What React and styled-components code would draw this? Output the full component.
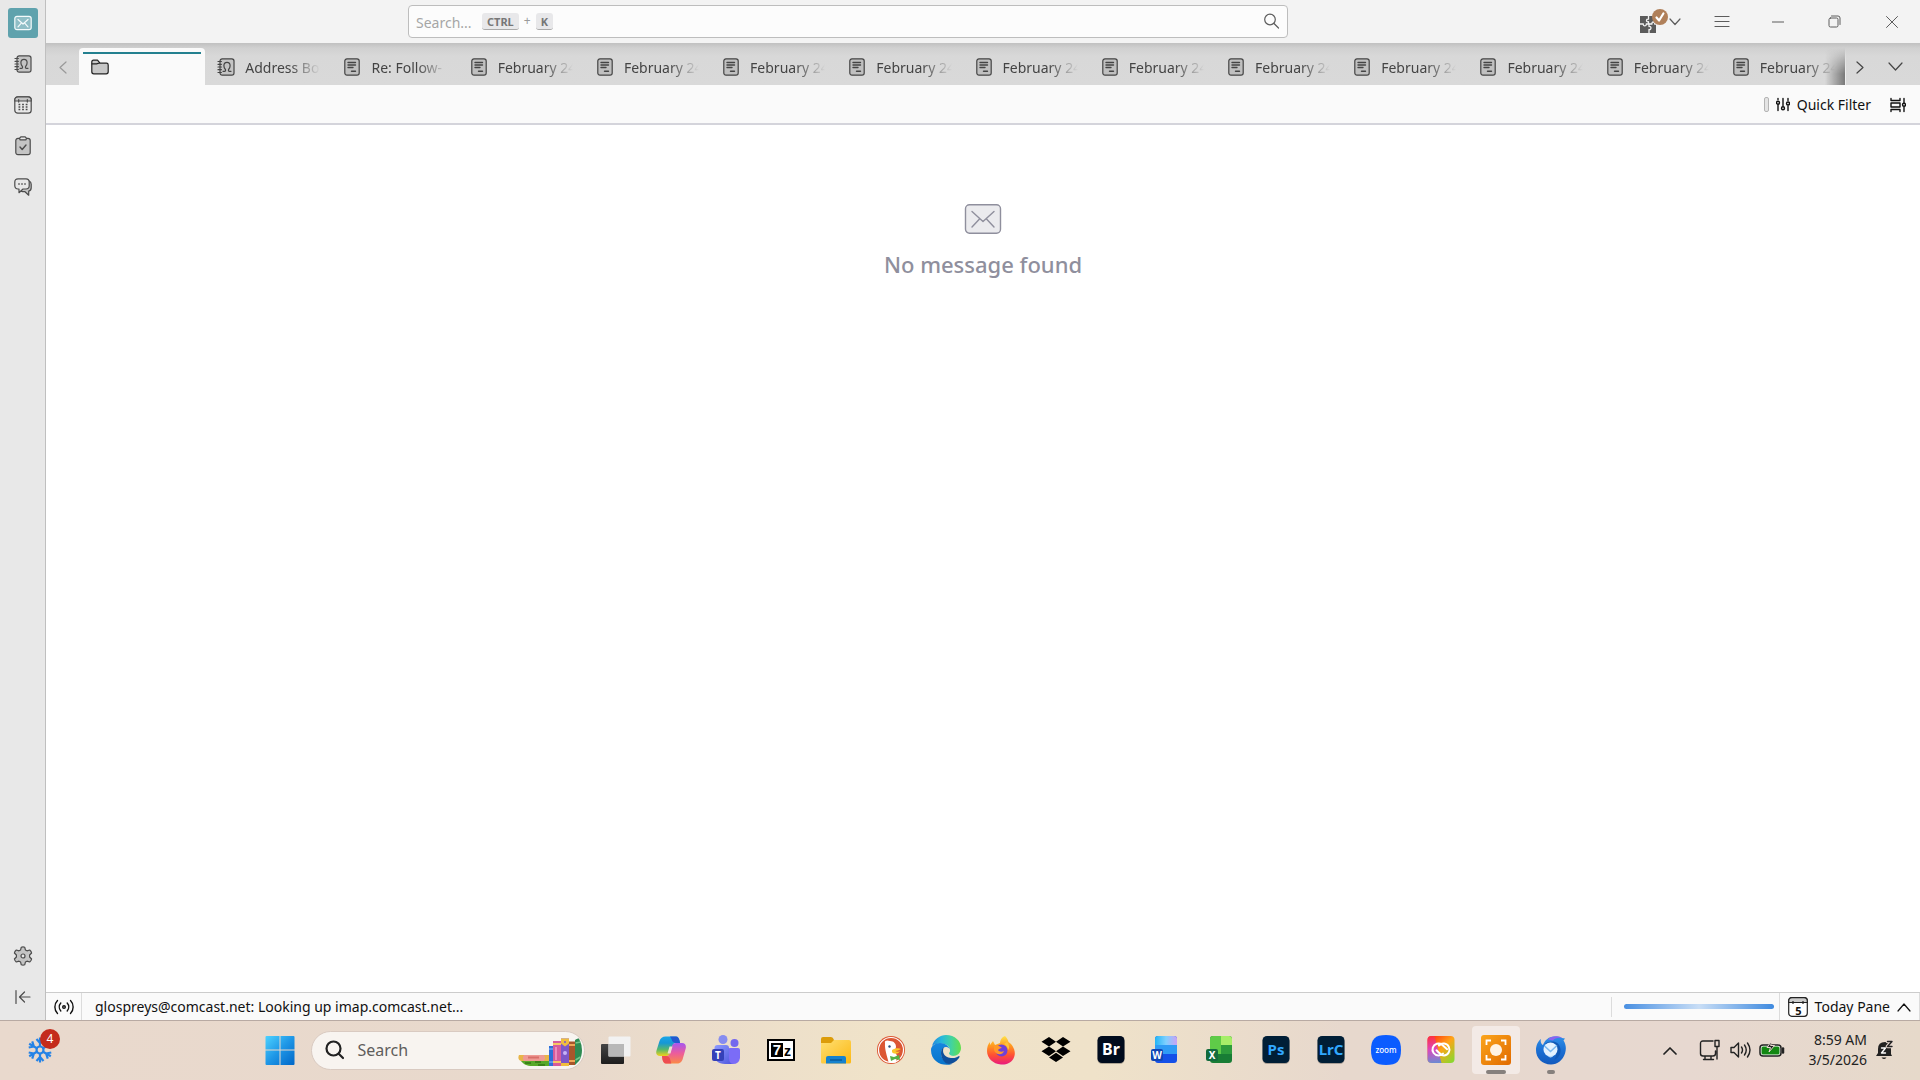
import React from "react";
import styled, { createGlobalStyle } from "styled-components";

const Global = createGlobalStyle`
  * { box-sizing: border-box; }
  body { margin: 0; background: #fff; }
  body, button, input { font-family: "Noto Sans", "Open Sans", sans-serif; }
  button { border: 0; background: none; padding: 0; margin: 0; color: inherit; }
  svg { display: block; flex: none; }
`;

const Screen = styled.div`
  height: 100vh;
  display: flex;
  flex-direction: column;
`;
const Mail = styled.div`
  flex: 1;
  min-height: 0;
  display: flex;
`;
const Spaces = styled.nav`
  flex: none;
  width: 46px;
  padding: 8px 0;
  display: flex;
  flex-direction: column;
  align-items: center;
  gap: 11px;
  background: #e8e8e8;
  border-right: 1px solid #bfbfbf;
  color: #4c4c4c;
`;
const SpaceButton = styled.button`
  width: 30px;
  height: 30px;
  display: grid;
  place-items: center;
  border-radius: 3px;
  background: ${(p) => (p.$active ? "#5fa2ad" : "transparent")};
  color: ${(p) => (p.$active ? "#f4fafb" : "inherit")};
`;
const Grow = styled.div`
  flex: ${(p) => p.$n || 1};
`;
const Main = styled.main`
  flex: 1;
  min-width: 0;
  display: flex;
  flex-direction: column;
`;
const TitleBar = styled.header`
  height: 44px;
  flex: none;
  display: flex;
  align-items: center;
  background: #f3f3f3;
  border-bottom: 1px solid #c2c2c2;
  color: #5c5c5c;
`;
const SearchBox = styled.form`
  position: relative;
  flex: 0 1 880px;
  height: 33px;
  margin-bottom: 1px;
  display: flex;
  align-items: center;
  padding-right: 7px;
  background: #fcfcfc;
  border: 1px solid #bdbdbd;
  border-radius: 4px;
`;
const SearchInput = styled.input`
  flex: 1;
  min-width: 0;
  height: 31px;
  padding: 2px 7px 0;
  border: 0;
  outline: 0;
  background: transparent;
  font-size: 14px;
  &::placeholder { color: #a6a6a6; opacity: 1; }
`;
const Shortcut = styled.span`
  position: absolute;
  left: 73px;
  top: 7px;
  display: flex;
  align-items: center;
  gap: 5px;
  font-size: 12px;
  line-height: 16px;
  color: #9a9a9a;
  pointer-events: none;
`;
const Kbd = styled.kbd`
  height: 17px;
  padding: 0 5px;
  border-radius: 3px;
  background: #e8e8ea;
  border-bottom: 1px solid #a9a9a9;
  color: #777;
  font: 700 11px/17px "Noto Sans", sans-serif;
`;
const Controls = styled.div`
  flex: 632;
  display: flex;
  justify-content: flex-end;
  align-items: center;
`;
const Control = styled.button`
  flex: none;
  width: ${(p) => p.$w || 57}px;
  height: 43px;
  display: flex;
  align-items: center;
  justify-content: center;
`;
const TabBar = styled.div`
  flex: none;
  height: 41px;
  padding-right: 4px;
  display: flex;
  align-items: stretch;
  background: linear-gradient(#c3c3c3, #d0d0d0 4px, #d8d8d8 12px, #d9d9d9);
  color: #444;
`;
const Scroll = styled.button`
  flex: none;
  width: ${(p) => p.$w}px;
  padding-top: 5px;
  display: grid;
  place-items: center;
  color: ${(p) => (p.$dim ? "#999" : "#444")};
`;
const Tabs = styled.div`
  position: relative;
  flex: 1;
  min-width: 0;
  display: flex;
  padding-top: 4px;
  &::after {
    content: "";
    position: absolute;
    right: 0;
    top: 4px;
    bottom: 0;
    width: 20px;
    background: linear-gradient(to right, transparent, #606060cc);
    mask: linear-gradient(transparent, #000 70%);
    border-right: 1px solid #eee;
  }
`;
const Tab = styled.button`
  flex: 1 1 0;
  min-width: 0;
  padding: 0 11px 0 12px;
  display: flex;
  align-items: center;
  gap: 10px;
  position: relative;
  border-radius: 4px 4px 0 0;
  background: ${(p) => (p.$active ? "#fafafa" : "transparent")};
  &::before {
    content: "";
    display: ${(p) => (p.$active ? "block" : "none")};
    position: absolute;
    left: 4px;
    right: 4px;
    top: 4px;
    height: 2px;
    background: #23808f;
  }
`;
const TabLabel = styled.span`
  flex: 1;
  min-width: 0;
  padding-top: 1px;
  overflow: hidden;
  white-space: nowrap;
  text-align: left;
  font-size: 14px;
  line-height: 21px;
  mask: linear-gradient(to right, #000 60%, transparent);
`;
const Toolbar = styled.div`
  flex: none;
  height: 40px;
  padding: 1px 14px 0 0;
  display: flex;
  align-items: center;
  justify-content: flex-end;
  gap: 19px;
  background: #fafafa;
  border-bottom: 2px solid #d4d4db;
`;
const ToolButton = styled.button`
  display: flex;
  align-items: center;
  gap: 7px;
  font-size: 14px;
  line-height: 20px;
  color: #111;
`;
const Handle = styled.span`
  width: 5px;
  height: 15px;
  border: 1px solid #b4b4b4;
  border-radius: 2px;
  background: #e4e4e4;
`;
const Empty = styled.section`
  flex: 1;
  min-height: 0;
  padding-top: 79px;
  display: flex;
  flex-direction: column;
  align-items: center;
  gap: 13px;
  background: #fff;
  color: #8f8f9d;
`;
const EmptyTitle = styled.h1`
  margin: 0;
  font-size: 22px;
  font-weight: 500;
  line-height: 34px;
`;
const StatusBar = styled.footer`
  flex: none;
  height: 28px;
  display: flex;
  align-items: center;
  background: #fafafa;
  border-top: 1px solid #ccc;
  font-size: 14px;
  line-height: 20px;
  color: #111;
`;
const StatusCell = styled.div`
  height: ${(p) => (p.$short ? "20px" : "100%")};
  display: flex;
  align-items: center;
  padding: ${(p) => p.$pad || "0"};
  border: 0 solid #dcdcdc;
  border-width: ${(p) => p.$edges};
`;
const Progress = styled.div`
  width: 150px;
  height: 5px;
  border-radius: 3px;
  background: linear-gradient(to right, #4a90e2, #c9def6 50%, #3f8adf);
`;
const Pane = styled.button`
  display: flex;
  align-items: center;
  gap: 7px;
  font-size: 14px;
  line-height: 20px;
  color: #111;
`;

const Taskbar = styled.div`
  flex: none;
  height: 60px;
  padding: 0 27px 1px 22px;
  display: flex;
  align-items: center;
  border-top: 1px solid #b8aaa3;
  background: linear-gradient(to right, #e9d9cd 0, #e8d9cc 30%, #f0e3c9 46%, #efe2c9 57%, #e7d8cd 70%, #e7d8d0 88%, #e6d9ca);
  color: #222;
`;
const Weather = styled.button`
  position: relative;
  width: 36px;
  height: 48px;
  display: grid;
  place-items: center;
`;
const Badge = styled.span`
  position: absolute;
  left: 18px;
  top: 3px;
  width: 20px;
  height: 20px;
  border-radius: 50%;
  background: #c42b1c;
  color: #fff;
  font-size: 12px;
  line-height: 20px;
  text-align: center;
`;
const Apps = styled.div`
  display: flex;
  align-items: center;
  gap: 7px;
`;
const AppButton = styled.button`
  position: relative;
  width: 48px;
  height: 48px;
  display: grid;
  place-items: center;
  border-radius: 4px;
  background: ${(p) => (p.$active ? "#f3eae6" : "transparent")};
  &::after {
    content: "";
    display: ${(p) => (p.$run ? "block" : "none")};
    position: absolute;
    bottom: 0;
    left: calc(50% - ${(p) => p.$run / 2 || 0}px);
    width: ${(p) => p.$run || 0}px;
    height: 4px;
    border-radius: 2px;
    background: #86807d;
  }
`;
const Pill = styled.label`
  width: 274px;
  height: 39px;
  padding: 0 2px 0 13px;
  display: flex;
  align-items: center;
  gap: 12px;
  overflow: hidden;
  border-radius: 20px;
  border: 1px solid #d9cac1;
  background: #f8f4f0;
`;
const PillInput = styled.input`
  flex: 1;
  min-width: 0;
  padding: 0;
  border: 0;
  outline: 0;
  background: transparent;
  font-size: 16px;
  &::placeholder { color: #605d5b; opacity: 1; }
`;
const Tray = styled.div`
  display: flex;
  align-items: center;
  gap: 8px;
`;
const Clock = styled.time`
  width: 74px;
  text-align: right;
  font-size: 14px;
  line-height: 20px;
`;

const Svg = ({ w = 18, h, vb, sw = 1.2, children }) => (
  <svg width={w} height={h || w} viewBox={vb || `0 0 ${w} ${h || w}`} fill="none" stroke="currentColor" strokeWidth={sw} strokeLinecap="round" strokeLinejoin="round" aria-hidden="true">
    {children}
  </svg>
);

const Envelope = () => (
  <Svg>
    <rect x=".8" y="2.3" width="16.4" height="13.4" rx="2.2" fill="#8fbec6" />
    <path d="M4 5.5 9 10l5-4.5M4 12.8l3.3-3.6M14 12.8l-3.3-3.6" />
  </Svg>
);
const BookIcon = () => (
  <Svg>
    <rect x="3" y=".8" width="14" height="16.4" rx="2.2" fill="#c4c4c4" />
    <path d="M1 3.5h3.4M1 6.3h3.4M1 9h3.4M1 11.700h3.4M1 14.5h3.4" />
    <path d="M6 13.300h1.500c1 0 1.300-1 .9-1.800C7.300 10.300 6.900 9 6.900 7.700c0-2 1.200-3.300 3.100-3.300s3.100 1.300 3.100 3.300c0 1.300-.4 2.600-1.500 3.800-.4.800-.1 1.800.9 1.800H14" />
  </Svg>
);
const CalendarIcon = () => (
  <Svg>
    <rect x=".8" y=".8" width="16.4" height="16.4" rx="3" fill="#e8e8e8" />
    <path d="M.8 5V4c0-1.900 1.300-3.200 3.200-3.200h10c1.900 0 3.200 1.300 3.200 3.200v1z" fill="#c4c4c4" />
    <path d="M4.700 3.500v2.600M13.300 3.500v2.600" />
    <path d="M4.500 8.500h1.800M8.100 8.500h1.800M11.700 8.500h1.800M4.500 11h1.800M8.100 11h1.800M11.700 11h1.800M4.500 13.600h1.800M8.100 13.600h1.800M11.700 13.600h1.800" strokeWidth="1.500" strokeLinecap="butt" />
  </Svg>
);
const TasksIcon = () => (
  <Svg w={18} h={20}>
    <rect x="1.800" y="2.300" width="14.400" height="16.400" rx="2.200" fill="#c4c4c4" />
    <path d="M5.500 2.300 6.800.8h4.400l1.300 1.500-.5 1.500H6z" fill="#e8e8e8" />
    <path d="m6 11 2.200 2.500L12 9" strokeWidth="1.400" />
  </Svg>
);
const ChatIcon = () => (
  <Svg w={18} h={18}>
    <path d="M15.200 3c1.300.6 2 1.700 2 3.300v3.400c0 2-.8 3-2.500 3.400v4.100l-3.700-3.500H8.500C7.400 13.700 7 12.800 7 12" fill="#c4c4c4" />
    <path d="M4 .8h8c2 0 3.200 1.200 3.200 3.200v3.800c0 2-1.200 3.200-3.200 3.200H9l-4 3.700V11H4C2 11 .8 9.800.8 7.800V4C.8 2 2 .8 4 .8z" fill="#e8e8e8" />
    <path d="M4.800 6h.4M7.800 6h.4M10.800 6h.4" strokeWidth="1.500" />
  </Svg>
);
const GearIcon = () => (
  <Svg w={20}>
    <path d="M8.300 1.200q1.700-.8 3.400 0l.7 2.700 1.600.9 2.700-.8q1.600 1.200 1.900 3l-2 2v2l2 2q-.3 1.800-1.900 3l-2.700-.8-1.600.9-.7 2.700q-1.700.8-3.400 0l-.7-2.700-1.600-.9-2.700.8q-1.600-1.200-1.900-3l2-2V9l-2-2q.3-1.800 1.900-3l2.700.8 1.600-.9z" fill="#c4c4c4" />
    <circle cx="10" cy="10" r="2" fill="#e8e8e8" />
  </Svg>
);
const CollapseIcon = () => (
  <Svg w={16}>
    <path d="M1 1.500v13M4.500 8H15M9.500 3l-5 5 5 5" />
  </Svg>
);
const FolderIcon = () => (
  <Svg w={18}>
    <path d="M.8 13.800V4.200c0-1.400.5-2 1.700-2h4l2.500 3h6.500c1.200 0 1.700.7 1.700 1.800v6.800c0 1.300-.6 2-2 2H2.800c-1.400 0-2-.7-2-2z" fill="#c8c8c8" stroke="#222" />
    <path d="M1 5.800h4.500L8.500 5" stroke="#222" />
  </Svg>
);
const MessageIcon = () => (
  <Svg w={18}>
    <rect x="1.800" y=".8" width="14.400" height="16.400" rx="2.200" fill="#c0c0c0" />
    <path d="M5 4.500h7.500M5 7h7.500M5 9.500h5M8.500 13.300h4" strokeWidth="1.400" />
  </Svg>
);
const Chevron = ({ d, w = 12, h = 12 }) => (
  <Svg w={w} h={h}><path d={d} /></Svg>
);
const AddonIcon = () => (
  <Svg w={30} h={26} sw={0}>
    <path d="M1 7h16v17H1z" fill="#5b5b5b" />
    <path d="M9.500 7v3.200c-2.500-.8-2.800 3.300 0 2.500V15M1 15h3.300c-.6 2.500 3.400 2.500 3 0h3.500M10 15v2.500c2.600-.5 2.600 3.600 0 3V24M11 15h2c-.5-2.800 3-2.500 2.700 0H18" stroke="#f3f3f3" strokeWidth="1.300" />
    <circle cx="21" cy="8" r="8" fill="#b0805a" />
    <path d="m17.500 8.500 2.600 3 4.300-7" stroke="#fff" strokeWidth="2.200" />
  </Svg>
);
const FilterIcon = () => (
  <Svg w={14} h={15} sw={1.4}>
    <path d="M2 1.500v1M2 8v5.500M7 1.500V9M12 1.500v2M12 9v4.500" />
    <circle cx="2" cy="5.800" r="1.500" /><circle cx="7" cy="11.300" r="1.500" /><circle cx="12" cy="6.500" r="1.500" />
  </Svg>
);
const DisplayIcon = () => (
  <Svg w={16} sw={1.4}>
    <path d="M1 1.500v2h9v-2M1 6h9v4H1zM1 14.500v-2h9v2M14 1.500V6M14 10v4.500" />
    <circle cx="14" cy="7.800" r="1.500" />
  </Svg>
);
const NetIcon = () => (
  <Svg w={20} h={16} sw={1.4}>
    <circle cx="10" cy="8" r="1.300" />
    <path d="M6.800 4c-2 2.300-2 5.700 0 8M13.200 4c2 2.300 2 5.700 0 8M3.500 1.500C0 5 0 11 3.500 14.500M16.500 1.500C20 5 20 11 16.500 14.500" />
  </Svg>
);

const Box = ({ bg, fg, t, size }) => (
  <svg width="30" height="30" viewBox="0 0 30 30" aria-hidden="true">
    <rect x="1.500" y="2" width="27" height="27" rx="4.500" fill="#0004" />
    <rect x="1.500" y="1" width="27" height="27" rx="4.500" fill={bg} />
    <text x="15" y="20" fill={fg} fontFamily="Noto Sans" fontWeight="700" fontSize={size} textAnchor="middle">{t}</text>
  </svg>
);
const Art = ({ children, w = 30 }) => (
  <svg width={w} height="30" viewBox={`0 0 ${w} 30`} aria-hidden="true">{children}</svg>
);
const Grad = ({ id, stops, v, h }) => (
  <linearGradient id={id} x1="0" y1="0" x2={v ? 0 : 1} y2={h ? 0 : 1}>
    {stops.map((c, i) => <stop key={i} offset={i / (stops.length - 1)} stopColor={c} />)}
  </linearGradient>
);

const WindowsLogo = () => (
  <Art>
    <Grad id="win" stops={["#4dd2ff", "#1e96e6", "#0067c8"]} />
    <path d="M1.500 1H14.500V14.500H.500V2a1 1 0 0 1 1-1zM15.500 1H28.500a1 1 0 0 1 1 1V14.500H15.500zM.500 15.500H14.500V30H1.500a1 1 0 0 1-1-1zM15.500 15.500H29.500V29a1 1 0 0 1-1 1H15.500z" fill="url(#win)" />
  </Art>
);
const Books = () => (
  <svg width="64" height="34" viewBox="0 -4 64 34" aria-hidden="true">
    <path d="M1 18h30v6H3c-3-1-3-4-2-6z" fill="#e8b548" />
    <path d="M6 18h20c1.500 2 1 4 0 6H6c-1.500-2-1.500-4 0-6z" fill="#ef9a94" /><path d="M10 19.500h11v2H10z" fill="#d96f6a" />
    <path d="M3 24h28v5H14c-5 0-9-2-11-5z" fill="#58a829" /><path d="M7 26h6M17 25h6M20 28h7" stroke="#337615" strokeWidth="1.500" />
    <path d="M31 9h4v20h-4z" fill="#2f6fd8" /><path d="M31 12h4M31 25h4" stroke="#8fc1ff" />
    <path d="M35 4h8v25h-8z" fill="#d65c9c" /><path d="M35 7h8M35 25h8" stroke="#f6c861" strokeWidth="2" /><path d="M38 10v13" stroke="#f39bc7" strokeWidth="1.500" />
    <path d="M43 1.500h8V29h-8z" fill="#7d57c7" /><path d="M43 1.500h8v5l-4 3-4-3zM43 26h8v3h-8z" fill="#f0bd3e" /><circle cx="47" cy="5" r="1" fill="#7d57c7" /><circle cx="47" cy="16" r="2" fill="#c7b2f5" />
    <path d="M51 4.500h6V28h-6z" fill="#a8562b" /><path d="M51 8h6M51 24h6" stroke="#f0a657" strokeWidth="2" />
    <path d="M57 3q2-2 4-1.500 3 6 3 12T61 24l-4 4z" fill="#2e8b52" /><path d="M57.500 6l5-1M57.500 23l5-3" stroke="#74c68b" strokeWidth="1.500" />
  </svg>
);
const Snowflake = () => (
  <Svg w={26} sw={2.2}>
    <g stroke="#2583e6" strokeLinecap="butt">
      <circle cx="13" cy="13" r="3.500" />
      {[0, 60, 120, 180, 240, 300].map((a) => (
        <path key={a} transform={`rotate(${a} 13 13)`} d="M13 9.500V.5M9.500 2l3.500 4 3.500-4" />
      ))}
    </g>
  </Svg>
);

const apps = [
  ["Task view", <Art>
    <Grad id="tv" stops={["#444", "#1d1d1d"]} v />
    <rect y="9" width="23" height="20" rx="1" fill="url(#tv)" /><rect x="7.500" y="1.500" width="22" height="20" rx="1" fill="#f2f2f2" /><path d="M7.500 9H23v12.500H7.500z" fill="#b8b8b8" />
  </Art>],
  ["Copilot", <Art>
    <Grad id="c1" stops={["#1aa6e8", "#1597d6", "#58b86a", "#f2d21a"]} v />
    <Grad id="c2" stops={["#a557f0", "#ec5c9c", "#fb8a45"]} v />
    <path d="M20 1.500c2 0 3 2 3.500 4L24 8h-4c-2 0-3 1-3.500 3l-1.500 6c-.8 3-2 4-5 4H4c-3 0-4.500-2-3.500-5.500L3.500 6c1-3 3-4.500 6-4.500z" fill="url(#c1)" />
    <path d="M14 1.500h6c2 0 3 2 3.500 4L24 8h-4c-2.500 0-4-1.500-4.500-4z" fill="#2358cf" />
    <path d="M10 28.500c-2 0-3-2-3.500-4L6 21h4c2.500 0 3.500-1 4.200-3.500L16 11c.8-2.300 2-3 4-3h6c3 0 4.500 2.500 3.700 5.500L27 23c-1 4-3 5.500-6 5.500z" fill="url(#c2)" />
    <path d="M6 21h4c2 0 4 1.500 4.300 4l1 3.500H10c-2 0-3-2-3.500-4z" fill="#ee4d52" />
    <path d="M13.500 11.500h3l-2 7h-3z" fill="#eee0d2" />
  </Art>],
  ["Teams", <Art>
    <Grad id="tm" stops={["#8e9bff", "#4c54dc"]} />
    <circle cx="12" cy="4.500" r="4.500" fill="#868cf0" /><circle cx="23.500" cy="8" r="4" fill="#7468ee" />
    <path d="M17 15q0-2 2-2h8q2 0 2 2v8q-1 6-7 6h-5z" fill="#7b6cf7" />
    <path d="M3.500 13q0-3 3-3H15q3 0 3 3v10q0 6 5 6H14C7 29 3.500 25 3.500 20z" fill="url(#tm)" />
    <rect x="1" y="14" width="12" height="12" rx="2" fill="#3440b8" /><text x="7" y="23.500" textAnchor="middle" fill="#fff" fontFamily="Noto Sans" fontWeight="700" fontSize="10">T</text>
  </Art>],
  ["7-Zip", <Art>
    <path d="M1 4h28v22H1z" fill="#000" /><path d="M3 6h24v18H3z" fill="#fff" /><path d="M5 8h12v14H5z" fill="#000" />
    <text x="11" y="20" textAnchor="middle" fill="#fff" fontFamily="Liberation Sans" fontWeight="700" fontSize="15">7</text><text x="21.500" y="21" textAnchor="middle" fill="#000" fontFamily="Liberation Sans" fontWeight="700" fontSize="14">z</text>
  </Art>],
  ["File Explorer", <Art>
    <Grad id="fe" stops={["#ffdf72", "#fcb813"]} />
    <path d="M0 4q0-2 2-2h8q2 0 3 3l6 2v6H0z" fill="#dc9c0a" /><path d="M0 8h10l3-3h15q2 0 2 2v20q0 1.500-1.500 1.500h-27Q0 28.500 0 27z" fill="url(#fe)" />
    <path d="M5 28.500V23q0-2 2-2h16q2 0 2 2v5.500z" fill="#1682ce" /><path d="M9 25h12" stroke="#095a9d" strokeWidth="1.500" />
  </Art>],
  ["DuckDuckGo", <Art>
    <circle cx="15" cy="15" r="14" fill="#dc5734" /><circle cx="15" cy="15" r="12.500" fill="none" stroke="#fff" strokeWidth="1.200" />
    <path d="M9 8C8 5 12 5 14 6c4 0 6 3 6 6l-1 4 2 5-1 6.500c-3 .8-6 .3-7.500-.5C11.500 22 8.500 15 9 8z" fill="#fff" /><circle cx="13.500" cy="11.500" r="1.200" fill="#284c79" />
    <path d="M16 15c3-2 7-2 9-1-2 1-4 2-6 2 2 1 4 1 5 0-2 4-7 3-8 1z" fill="#fcc72a" /><path d="m14 21 4 1 5-2 1 5-5-1-4 2z" fill="#56b146" />
  </Art>],
  ["Edge", <Art>
    <Grad id="e1" stops={["#2588dc", "#27b8dc", "#42d3a0", "#63df4a"]} h />
    <Grad id="e2" stops={["#1686df", "#0874cb"]} v />
    <path d="M1 11C3 4 9 0 15 0c9 0 15 6 15 13 0 5-4 8-8 8-4 0-5-2-3.500-4C20 14 18 10 13 9 8 8 3 9 1 11z" fill="url(#e1)" />
    <path d="M0 15c0-4 4-7 9-7 6 0 10 4 10 8 0-1-1-4-4-4-3 0-5 3-5 6 0 6 5 11 11 11-9 3-21-2-21-14z" fill="url(#e2)" />
    <path d="M10 18c0-3 1-5 3-6-2 4-1 10 7 11 3 .4 6-.5 8-2 1 0 .6 1 0 2-3 4-7 6-10 6-4 0-8-5-8-11z" fill="#104f9b" />
    <path d="M13 14c1-2 5-2 6 1 .3 1-.5 2-1 3 0 2 2 3 5 3-7 2-12-2-10-7z" fill="#f0e3c9" />
  </Art>],
  ["Firefox", <Art>
    <Grad id="ff" stops={["#ffe34a", "#ff9b20", "#ff5132", "#e91a80"]} v />
    <path d="M19 1c2 2 3 4 3.500 6L25 9c4 5 5 10 2.500 14.500C25 28 20 30 15 29.500 7 29 1 23 1 16c0-4 1-7 3-9v3l3-4 2 4 5-2c0-3 2-6 5-7z" fill="url(#ff)" />
    <circle cx="15.500" cy="15.500" r="6" fill="#7040d8" /><path d="M8 11c3-1 6 0 8 2-2 0-3 1-4 2 1 2 4 2 6 1-1 4-8 5-10-1z" fill="#ff9828" /><path d="M18 9c2 1 4 4 4 6 2-2 1-6-1-8z" fill="#ffc43c" />
  </Art>],
  ["Dropbox", <Art>
    <path d="m8 2 7 4.700-7 4.700L.5 6.700zM22 2l7.500 4.700-7.500 4.700-7-4.700zM8 11.500l7 4.700-7 4.700-7.500-4.700zM22 11.500l7.500 4.700-7.500 4.700-7-4.700zM8 22.500l7-4.700 7 4.700-7 4.600z" fill="#000" />
  </Art>],
  ["Bridge", <Box bg="#000b1d" fg="#fff" t="Br" size="16" />],
  ["Word", <Art>
    <Grad id="wd" stops={["#22b5f5", "#7fd0ff", "#c9a2f5"]} h />
    <rect x="4" y="1" width="22" height="27" rx="3" fill="#1450e8" /><path d="M4 10h22v9H4z" fill="#2f9bf5" /><path d="M4 10V4q0-3 3-3h16q3 0 3 3v6z" fill="url(#wd)" />
    <rect y="14" width="12" height="12" rx="2" fill="#1146b4" /><text x="6" y="23.500" textAnchor="middle" fill="#fff" fontFamily="Noto Sans" fontWeight="700" fontSize="10">W</text>
  </Art>],
  ["Excel", <Art>
    <rect x="4" y="1" width="22" height="27" rx="3" fill="#187d35" /><path d="M4 4q0-3 3-3h8v18H4z" fill="#5fcb48" /><path d="M15 1h8q3 0 3 3v6H15z" fill="#a6ee68" /><path d="M15 10h11v9H15z" fill="#2d9c3c" />
    <rect y="14" width="12" height="12" rx="2" fill="#126b3d" /><text x="6" y="23.500" textAnchor="middle" fill="#fff" fontFamily="Noto Sans" fontWeight="700" fontSize="10">X</text>
  </Art>],
  ["Photoshop", <Box bg="#001e36" fg="#31a8ff" t="Ps" size="15" />],
  ["Lightroom Classic", <Box bg="#001e36" fg="#31a8ff" t="LrC" size="15" />],
  ["Zoom", <Art>
    <path d="M15 0C26 0 30 4 30 15S26 30 15 30 0 26 0 15 4 0 15 0z" fill="#0b5cff" /><text x="15" y="17.500" textAnchor="middle" fill="#fff" fontFamily="Noto Sans" fontWeight="500" fontSize="8">zoom</text>
  </Art>],
  ["Creative Cloud", <Art>
    <Grad id="cc1" stops={["#ff1d12", "#ffa416", "#7bde33"]} />
    <Grad id="cc2" stops={["#ff3048", "#d43be8", "#4e7fff"]} v />
    <rect x="1.500" y="1" width="27" height="27" rx="4" fill="url(#cc1)" /><path d="M1.500 5q0-4 4-4h3l7 27h-10q-4 0-4-4z" fill="url(#cc2)" opacity=".8" />
    <path d="M17 18.500c-1 1.300-2.600 2-4.500 2a6 6 0 1 1 3.600-10.800l5 4.500M13 10.500a6 6 0 1 1 5 10c-3 0-4-2-7.500-5.200" fill="none" stroke="#fff" strokeWidth="2" strokeLinecap="round" />
  </Art>],
  ["Screen capture", <Art>
    <Grad id="sc" stops={["#fba51b", "#e16a00"]} />
    <rect width="30" height="30" rx="3" fill="url(#sc)" /><circle cx="15" cy="15" r="6" fill="#fff3e4" /><path d="M5.500 10V5.500H10M20 5.500h4.500V10M24.500 20v4.500H20M10 24.500H5.500V20" fill="none" stroke="#fff" strokeWidth="1.800" />
  </Art>, 20],
  ["Thunderbird", <Art>
    <Grad id="tb" stops={["#2f8fe8", "#1b6fd3", "#1259bd"]} v />
    <path d="M5 4c-1 3 .5 5 2 6 2-5 6-8.500 11-8.500 4 0 6 .3 8 1.500l3 .5-1.500 2C30 9 30.500 14 29 18.500 27 25 21.500 29.500 15 29.500 6 29.500 0 23 0 15 0 10.500 2 6 5 4z" fill="url(#tb)" />
    <path d="M12 4.500c2-2.500 6-3.500 9-3.200 2 .2 4 .7 5 1.700-4-.8-7 0-9 2.500z" fill="#8b63ef" />
    <path d="M9 9c5-4 13-3 15 3s-1 11-6 13c3-4 3-9 0-12S12 9 9 9z" fill="#1259b5" />
    <circle cx="14.500" cy="14.500" r="7" fill="#e4f2ff" /><path d="m8.500 11 6 5.500 6.500-6" fill="none" stroke="#7db8ee" strokeWidth="1.600" />
    <path d="M10 20q4 2 8 0-2 3-4 2.500z" fill="#b9dcfa" />
  </Art>, 8],
];

const months = Array.from({ length: 11 }, () => "February 24");

export default function App() {
  return (
    <Screen>
      <Global />
      <Mail>
        <Spaces aria-label="Spaces">
          <SpaceButton $active aria-label="Mail"><Envelope /></SpaceButton>
          <SpaceButton aria-label="Address Book"><BookIcon /></SpaceButton>
          <SpaceButton aria-label="Calendar"><CalendarIcon /></SpaceButton>
          <SpaceButton aria-label="Tasks"><TasksIcon /></SpaceButton>
          <SpaceButton aria-label="Chat"><ChatIcon /></SpaceButton>
          <Grow />
          <SpaceButton aria-label="Settings"><GearIcon /></SpaceButton>
          <SpaceButton aria-label="Collapse"><CollapseIcon /></SpaceButton>
        </Spaces>
        <Main>
          <TitleBar>
            <Grow $n={362} />
            <SearchBox role="search">
              <SearchInput placeholder="Search..." aria-label="Search" />
              <Shortcut><Kbd>CTRL</Kbd>+<Kbd>K</Kbd></Shortcut>
              <Svg w={17}><circle cx="7" cy="6.500" r="5.300" /><path d="m11 10.500 4.500 4.500" /></Svg>
            </SearchBox>
            <Controls>
              <Control $w={70} aria-label="Extensions"><AddonIcon /><Chevron d="m1 3 5 5.500L11 3" /></Control>
              <Control $w={54} aria-label="Menu"><Svg w={16}><path d="M1 2.500h14M1 7.500h14M1 12.500h14" /></Svg></Control>
              <Control aria-label="Minimize"><Svg w={12}><path d="M0 6h12" /></Svg></Control>
              <Control aria-label="Restore"><Svg w={13} sw={1}><rect x="1" y="3" width="9" height="9" rx="1.500" /><path d="M3.500 1h6.500q2 0 2 2v6.500" /></Svg></Control>
              <Control aria-label="Close"><Svg w={12} sw={1}><path d="m.5.5 11 11M11.500.5l-11 11" /></Svg></Control>
            </Controls>
          </TitleBar>
          <TabBar>
            <Scroll $w={33} $dim aria-label="Scroll tabs back"><Chevron w={9} h={13} d="M8 1 2 6.500 8 12" /></Scroll>
            <Tabs role="tablist">
              <Tab $active role="tab" aria-label="Folder"><FolderIcon /></Tab>
              <Tab role="tab"><BookIcon /><TabLabel>Address Book</TabLabel></Tab>
              <Tab role="tab"><MessageIcon /><TabLabel>Re: Follow-</TabLabel></Tab>
              {months.map((m, i) => (
                <Tab key={i} role="tab"><MessageIcon /><TabLabel>{m}</TabLabel></Tab>
              ))}
            </Tabs>
            <Scroll $w={28} aria-label="Scroll tabs forward"><Chevron w={8} h={13} d="m1 1 6 5.500L1 12" /></Scroll>
            <Scroll $w={42} aria-label="List all tabs"><Chevron w={15} h={10} d="m1 1 6.500 7L14 1" /></Scroll>
          </TabBar>
          <Toolbar>
            <ToolButton><Handle /><FilterIcon />Quick Filter</ToolButton>
            <ToolButton aria-label="Display options"><DisplayIcon /></ToolButton>
          </Toolbar>
          <Empty>
            <Svg w={38} h={30} sw={1.4}>
              <rect x="1.500" y=".8" width="35" height="28.400" rx="4" fill="#ebebee" />
              <path d="M8 7.500 19 17.500 30 7.500M8 23l7.500-8M30 23l-7.500-8" />
            </Svg>
            <EmptyTitle>No message found</EmptyTitle>
          </Empty>
          <StatusBar>
            <StatusCell $edges="0 1px 0 0" $pad="0 7px 0 8px"><NetIcon /></StatusCell>
            <StatusCell $edges="0" $pad="0 13px">glospreys@comcast.net: Looking up imap.comcast.net...</StatusCell>
            <Grow />
            <StatusCell $short $edges="0 0 0 1px" $pad="0 5px 0 12px"><Progress role="progressbar" aria-label="Activity" /></StatusCell>
            <StatusCell $edges="0 1px" $pad="0 8px">
              <Pane>
                <svg width="20" height="20" viewBox="0 0 20 20" fill="none" stroke="#222" strokeWidth="1.200" aria-hidden="true">
                  <rect x=".7" y=".7" width="18.600" height="18.600" rx="3" fill="#fff" /><path d="M.7 5.500V4Q.7.7 4 .7h12q3.300 0 3.300 3.300v1.500z" fill="#ccc" /><path d="M5 4v3M15 4v3" />
                  <text x="10.500" y="17.500" textAnchor="middle" fill="#111" stroke="none" fontFamily="Noto Sans" fontWeight="700" fontSize="11">5</text>
                </svg>
                Today Pane
                <Chevron w={14} h={10} d="m1 9 6-7 6 7" />
              </Pane>
            </StatusCell>
          </StatusBar>
        </Main>
      </Mail>
      <Taskbar>
        <Weather aria-label="Weather"><Snowflake /><Badge>4</Badge></Weather>
        <Grow $n={197} />
        <Apps>
          <AppButton aria-label="Start"><WindowsLogo /></AppButton>
          <Pill>
            <Svg w={20} sw={2.2}><circle cx="8.500" cy="8.500" r="7" /><path d="m13.700 13.700 4.300 4.300" /></Svg>
            <PillInput placeholder="Search" aria-label="Search the PC" />
            <Books />
          </Pill>
          {apps.map(([name, art, run]) => (
            <AppButton key={name} aria-label={name} $run={run} $active={name === "Screen capture"}>{art}</AppButton>
          ))}
        </Apps>
        <Grow $n={73} />
        <Tray>
          <Control $w={42} aria-label="Show hidden icons"><Svg w={14} h={9} sw={1.7}><path d="m1 8 6-6 6 6" /></Svg></Control>
          <Control $w={22} aria-label="Network">
            <Svg w={22} sw={1.4}><path d="M14 2H4Q1.500 2 1.500 4.500v10Q1.500 17 4 17h10q2.500 0 2.500-2.500V12M6 17v3.500M12 17v3.500M4.500 20.500h10M16 1.500h4v6h-4zM18 7.500V20" /></Svg>
          </Control>
          <Control $w={22} aria-label="Volume">
            <Svg w={21} h={18} sw={1.4}><path d="M1 6.500h3L8.500 2v14L4 11.500H1zM11.500 6q2 3 0 6M14.500 4q3.500 5 0 10M17.500 2q5 7 0 14" /></Svg>
          </Control>
          <Control $w={26} aria-label="Battery">
            <Svg w={26} h={20} sw={1.5}>
              <rect x="1" y="5" width="21" height="11" rx="3" fill="#fff" /><rect x="2.500" y="6.500" width="18" height="8" rx="1.500" fill="#128712" stroke="none" /><path d="M24 8.500v4" strokeWidth="2.500" />
              <path d="m13 .5-5 7h3.500L10 12l5.500-6.500H12z" fill="#222" stroke="#e7d8d0" strokeWidth="1" />
            </Svg>
          </Control>
          <Clock>8:59 AM<br />3/5/2026</Clock>
          <Control $w={18} aria-label="Notifications">
            <Svg w={18} h={20} sw={0}>
              <path d="M3 9q0-7 7-7 5 0 6 6v6l1 2H1l2-3z" fill="#222" /><path d="M6.500 17.500h5q-2.500 3-5 0z" fill="#222" />
              <path d="M12.500 1.500H17l-4.500 5H17" stroke="#e7d8d0" strokeWidth="3.500" /><path d="M12.500 1.500H17l-4.500 5H17" stroke="#222" strokeWidth="1.400" /><path d="M6.500 8h4l-4 5h4" stroke="#fff" strokeWidth="1.400" />
            </Svg>
          </Control>
        </Tray>
      </Taskbar>
    </Screen>
  );
}
